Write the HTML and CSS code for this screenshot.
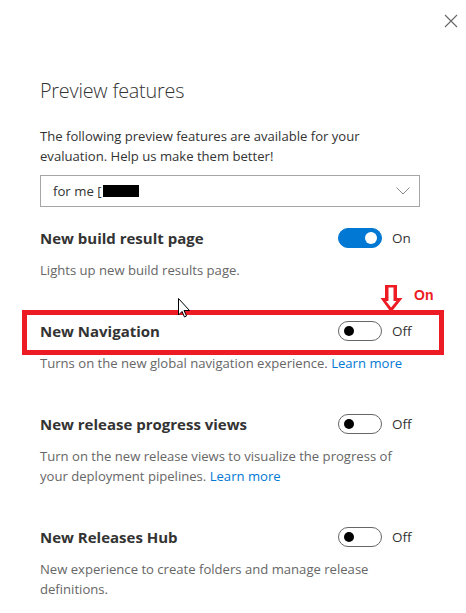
FILE: index.html
```html
<!DOCTYPE html>
<html>
<head>
<meta charset="utf-8">
<link rel="stylesheet" href="styles.css">
</head>
<body>
<div class="panel">
  <div class="topbar">
    <button class="close" aria-label="Close">
      <svg width="14" height="14" viewBox="0 0 14 14"><path d="M1 1 L13 13 M13 1 L1 13" stroke="#666" stroke-width="1.1" fill="none"/></svg>
    </button>
  </div>
  <h1 class="title">Preview features</h1>
  <p class="intro">The following preview features are available for your evaluation. Help us make them better!</p>
  <div class="select">
    <span class="select-text">for me [<span class="redact"></span></span>
    <svg class="chev" width="14" height="8" viewBox="0 0 14 8"><path d="M0.5 0.5 L7 7 L13.5 0.5" stroke="#888" stroke-width="1" fill="none"/></svg>
  </div>

  <div class="feature first">
    <div class="feature-head">
      <span class="feature-name">New build result page</span>
      <span class="switch-group"><span class="switch on"><span class="knob"></span></span><span class="state">On</span></span>
    </div>
    <p class="desc">Lights up new build results page.</p>
  </div>

  <div class="feature">
    <div class="feature-head marked">
      <span class="feature-name">New Navigation</span>
      <span class="switch-group"><span class="switch"><span class="knob"></span></span><span class="state">Off</span></span>
      <span class="mark-box"></span>
      <span class="mark-note">
        <svg class="arrow" width="23" height="28" viewBox="0 0 23 28"><path d="M5 0 H17 V13 H22.5 L11 27.5 L0.5 13 H5 Z" fill="#ed1c24"/><path d="M8.5 2.5 H13.5 V16 H16.5 L11 22.5 L6 16 H8.5 Z" fill="#fff"/></svg>
        <span class="mark-on">On</span>
      </span>
      <svg class="cursor" width="13" height="20" viewBox="0 0 13 20"><path d="M0.5 0.5 V17 L4 13.5 L6.5 19 L8.5 18 L6 12.5 H11.5 Z" fill="#fff" stroke="#000" stroke-width="1"/></svg>
    </div>
    <p class="desc">Turns on the new global navigation experience. <a href="#">Learn more</a></p>
  </div>

  <div class="feature">
    <div class="feature-head">
      <span class="feature-name">New release progress views</span>
      <span class="switch-group"><span class="switch"><span class="knob"></span></span><span class="state">Off</span></span>
    </div>
    <p class="desc">Turn on the new release views to visualize the progress of your deployment pipelines. <a href="#">Learn more</a></p>
  </div>

  <div class="feature">
    <div class="feature-head">
      <span class="feature-name">New Releases Hub</span>
      <span class="switch-group"><span class="switch"><span class="knob"></span></span><span class="state">Off</span></span>
    </div>
    <p class="desc">New experience to create folders and manage release definitions.</p>
  </div>
</div>
</body>
</html>
```

FILE: styles.css
```css
* { box-sizing: border-box; }
html, body { margin: 0; padding: 0; background: #fff; }
body {
  font-family: "Open Sans", "Noto Sans", sans-serif;
  color: #333;
  width: 466px;
  height: 613px;
  overflow: hidden;
}
.panel {
  padding: 0 46px 0 40px;
}
.topbar {
  display: flex;
  justify-content: flex-end;
  margin-right: -38px;
  padding-top: 14px;
  height: 40px;
}
.close {
  border: 0;
  background: none;
  padding: 0;
  width: 14px;
  height: 14px;
  display: block;
}
.close svg { display: block; }
.title {
  margin: 36px 0 0 0;
  font-size: 19.8px;
  font-weight: 300;
  line-height: 30px;
  color: #333;
  letter-spacing: -0.2px;
}
.intro {
  margin: 20px 0 0 0;
  font-size: 13.1px;
  line-height: 20px;
  color: #333;
  width: 340px;
}
.select {
  margin-top: 9px;
  height: 32px;
  border: 1px solid #a6a6a6;
  display: flex;
  align-items: center;
  justify-content: space-between;
  padding: 0 9px 0 12px;
  font-size: 13.2px;
  color: #333;
}
.select-text { display: flex; align-items: center; }
.redact {
  display: inline-block;
  width: 36px;
  height: 12px;
  background: #000;
  margin-left: 1px;
}
.chev { display: block; }
.feature { margin-top: 40px; }
.feature.first { margin-top: 20px; }
.feature-head {
  display: flex;
  align-items: center;
  justify-content: space-between;
  height: 22px;
  position: relative;
}
.feature-name {
  font-size: 15px;
  font-weight: 700;
  color: #333;
}
.switch-group {
  display: flex;
  align-items: center;
  width: 82px;
  gap: 10px;
}
.switch {
  width: 44px;
  height: 20px;
  border-radius: 10px;
  border: 1px solid #666;
  display: flex;
  align-items: center;
  padding: 0 4px;
  background: #fff;
}
.switch .knob {
  width: 10px;
  height: 10px;
  border-radius: 50%;
  background: #000;
  margin-left: 1px;
}
.switch.on {
  background: #0078d4;
  border-color: #0078d4;
  justify-content: flex-end;
}
.switch.on .knob {
  background: #fff;
  width: 12px;
  height: 12px;
  margin-left: 0;
}
.state {
  font-size: 13.5px;
  color: #333;
}
.desc {
  margin: 11px 0 0 0;
  font-size: 13.1px;
  line-height: 20px;
  color: #666;
}
.desc a {
  color: #0078d4;
  text-decoration: none;
}
.mark-box {
  position: absolute;
  left: -18px;
  right: -24px;
  top: -10px;
  bottom: -13px;
  border: 5px solid #ed1c24;
  pointer-events: none;
}
.mark-note {
  position: absolute;
  left: 340px;
  top: -35px;
  display: flex;
  align-items: flex-start;
  gap: 11px;
}
.arrow { display: block; }
.mark-on {
  color: #ed1c24;
  font-weight: 700;
  font-size: 14px;
  line-height: 14px;
  margin-top: 3px;
  font-family: "Liberation Sans", sans-serif;
}
.cursor {
  position: absolute;
  left: 138px;
  top: -22px;
}
```
